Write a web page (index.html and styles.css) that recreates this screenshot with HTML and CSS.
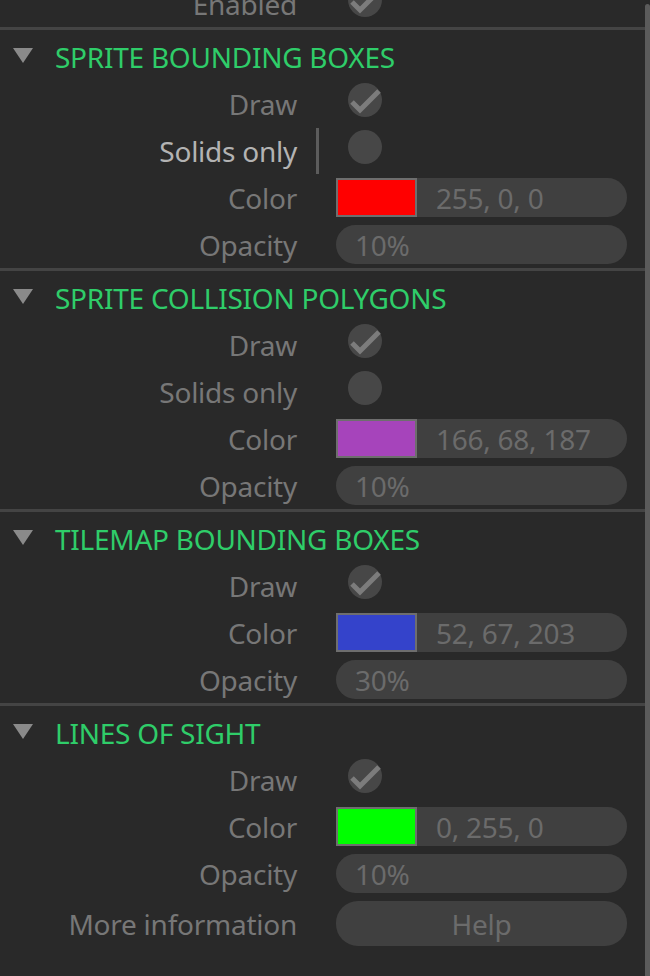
FILE: index.html
```html
<!DOCTYPE html>
<html lang="en">
<head>
    <meta charset="UTF-8">
    <meta name="viewport" content="width=device-width, initial-scale=1.0">
    <title>Debug overlay settings</title>
    <link rel="stylesheet" href="styles.css">
</head>
<body>
    <div class="panel">
        <div class="content">
            <div class="row">
                <span class="label">Enabled</span>
                <span></span>
                <span class="check on"><svg viewBox="0 0 34 34"><polyline points="4,19 12,27 31,8"/></svg></span>
            </div>

            <div class="section">
                <div class="section-header">
                    <span class="arrow"></span>
                    <span class="section-title">SPRITE BOUNDING BOXES</span>
                </div>
                <div class="row">
                    <span class="label">Draw</span>
                    <span></span>
                    <span class="check on"><svg viewBox="0 0 34 34"><polyline points="4,19 12,27 31,8"/></svg></span>
                </div>
                <div class="row focused">
                    <span class="label">Solids only</span>
                    <span class="caret"></span>
                    <span class="check"></span>
                </div>
                <div class="row">
                    <span class="label">Color</span>
                    <span></span>
                    <div class="field">
                        <span class="swatch" style="background: rgb(255, 0, 0)"></span>
                        <span class="value">255, 0, 0</span>
                    </div>
                </div>
                <div class="row">
                    <span class="label">Opacity</span>
                    <span></span>
                    <div class="field"><span class="value solo">10%</span></div>
                </div>
            </div>

            <div class="section">
                <div class="section-header">
                    <span class="arrow"></span>
                    <span class="section-title">SPRITE COLLISION POLYGONS</span>
                </div>
                <div class="row">
                    <span class="label">Draw</span>
                    <span></span>
                    <span class="check on"><svg viewBox="0 0 34 34"><polyline points="4,19 12,27 31,8"/></svg></span>
                </div>
                <div class="row">
                    <span class="label">Solids only</span>
                    <span></span>
                    <span class="check"></span>
                </div>
                <div class="row">
                    <span class="label">Color</span>
                    <span></span>
                    <div class="field">
                        <span class="swatch" style="background: rgb(166, 68, 187)"></span>
                        <span class="value">166, 68, 187</span>
                    </div>
                </div>
                <div class="row">
                    <span class="label">Opacity</span>
                    <span></span>
                    <div class="field"><span class="value solo">10%</span></div>
                </div>
            </div>

            <div class="section">
                <div class="section-header">
                    <span class="arrow"></span>
                    <span class="section-title">TILEMAP BOUNDING BOXES</span>
                </div>
                <div class="row">
                    <span class="label">Draw</span>
                    <span></span>
                    <span class="check on"><svg viewBox="0 0 34 34"><polyline points="4,19 12,27 31,8"/></svg></span>
                </div>
                <div class="row">
                    <span class="label">Color</span>
                    <span></span>
                    <div class="field">
                        <span class="swatch" style="background: rgb(52, 67, 203)"></span>
                        <span class="value">52, 67, 203</span>
                    </div>
                </div>
                <div class="row">
                    <span class="label">Opacity</span>
                    <span></span>
                    <div class="field"><span class="value solo">30%</span></div>
                </div>
            </div>

            <div class="section">
                <div class="section-header">
                    <span class="arrow"></span>
                    <span class="section-title">LINES OF SIGHT</span>
                </div>
                <div class="row">
                    <span class="label">Draw</span>
                    <span></span>
                    <span class="check on"><svg viewBox="0 0 34 34"><polyline points="4,19 12,27 31,8"/></svg></span>
                </div>
                <div class="row">
                    <span class="label">Color</span>
                    <span></span>
                    <div class="field">
                        <span class="swatch" style="background: rgb(0, 255, 0)"></span>
                        <span class="value">0, 255, 0</span>
                    </div>
                </div>
                <div class="row">
                    <span class="label">Opacity</span>
                    <span></span>
                    <div class="field"><span class="value solo">10%</span></div>
                </div>
                <div class="row help-row">
                    <span class="label">More information</span>
                    <span></span>
                    <button class="help-btn">Help</button>
                </div>
            </div>
        </div>
        <div class="scrollbar"></div>
    </div>
</body>
</html>
```

FILE: styles.css
```css
* {
    margin: 0;
    padding: 0;
    box-sizing: border-box;
}

html, body {
    height: 100%;
    overflow: hidden;
}

body {
    font-family: 'Noto Sans', 'Open Sans', sans-serif;
    font-size: 28px;
    letter-spacing: -0.25px;
    background: #292929;
    color: #777;
}

.panel {
    display: flex;
    height: 976px;
    overflow: hidden;
}

.content {
    flex: 1;
    margin-top: -20px;
}

.scrollbar {
    width: 5px;
    margin-top: 4px;
    background: #5b5b5b;
    border-radius: 4px 4px 0 0;
}

.section {
    border-top: 3px solid #444;
}

.section-header {
    display: flex;
    align-items: center;
    height: 50px;
}

.arrow {
    width: 0;
    height: 0;
    margin: 0 22px 0 13px;
    border-left: 10.5px solid transparent;
    border-right: 10.5px solid transparent;
    border-top: 15px solid #8a8a8a;
}

.section-title {
    color: #2fcd69;
    padding-top: 4px;
}

.row {
    display: grid;
    grid-template-columns: 297px 39px 291px;
    align-items: center;
    height: 47px;
}

.label {
    text-align: right;
    white-space: nowrap;
}

.focused .label {
    color: #b3b3b3;
}

.caret {
    justify-self: start;
    width: 3px;
    height: 46px;
    margin-left: 19px;
    background: #5c5c5c;
}

.check {
    align-self: start;
    width: 34px;
    height: 34px;
    margin: 3px 0 0 12px;
    border-radius: 50%;
    background: #474747;
}

.check svg {
    display: block;
    width: 34px;
    height: 34px;
}

.check polyline {
    fill: none;
    stroke: #7c7c7c;
    stroke-width: 5;
}

.field {
    display: flex;
    align-items: center;
    height: 39px;
    border-radius: 20px;
    background: #404040;
}

.swatch {
    flex-shrink: 0;
    width: 81px;
    height: 39px;
    border: 2px solid #6e6e6e;
}

.value {
    margin-left: 19px;
    color: #6b6b6b;
}

.help-row {
    height: 53px;
}

.help-btn {
    height: 45px;
    border: none;
    border-radius: 22px;
    background: #404040;
    color: #6b6b6b;
    font-family: inherit;
    font-size: 28px;
    letter-spacing: inherit;
}
```
